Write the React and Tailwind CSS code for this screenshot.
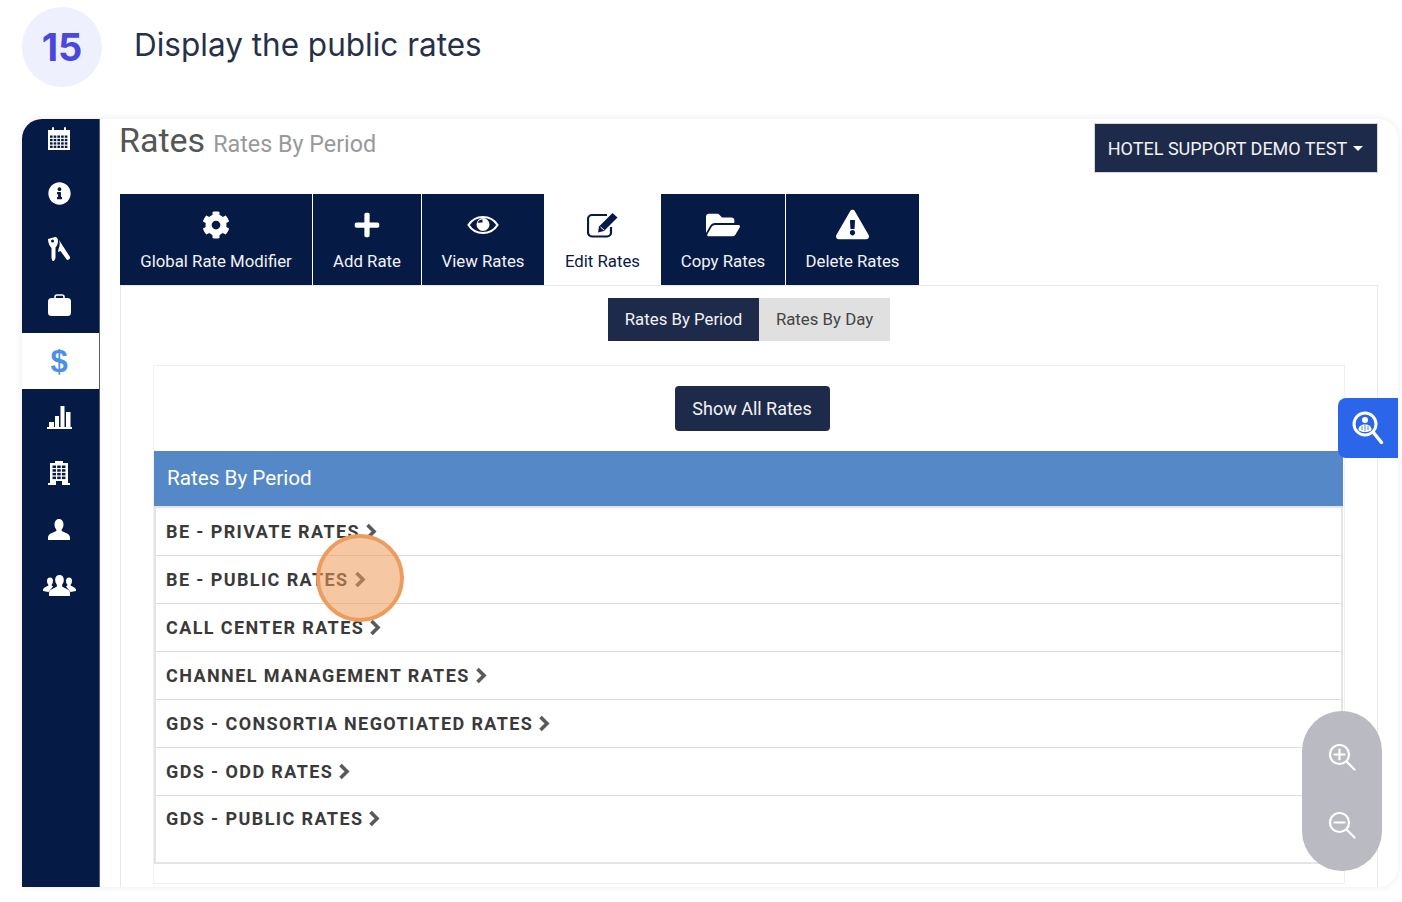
import React from 'react';
import { FaCog, FaPlus, FaFolderOpen, FaExclamationTriangle, FaInfoCircle } from 'react-icons/fa';

const CalendarIcon = () => (
  <svg width="22" height="23" viewBox="0 0 22 23" fill="white">
    <rect x="4" y="0" width="2" height="4" rx="1" />
    <rect x="16" y="0" width="2" height="4" rx="1" />
    <path d="M0 3h22v20H0z" />
    <g fill="#061a46">
      {[0, 1, 2, 3].map((r) =>
        [0, 1, 2, 3, 4].map((c) => <rect key={`${r}-${c}`} x={2 + c * 3.7} y={8.5 + r * 3.4} width="2.6" height="2.3" />)
      )}
    </g>
  </svg>
);

const KeysIcon = () => (
  <svg width="23" height="24" viewBox="0 0 23 24" fill="white">
    <path d="M0 2 7 0c2 0 3 2 3 4 0 3-1 5-2.500 6.500V21L6 24H4.500l-1-3V11C1.500 9 0 6 0 2Z" />
    <circle cx="4.500" cy="4" r="1.500" fill="#061a46" />
    <path d="M11 3c1 3 1 6-.5 9l-.5 3 2.500-1 6.500 9c2 0 3.500-1.500 3-3L11 3Z" />
  </svg>
);

const BriefcaseIcon = () => (
  <svg width="23" height="22" viewBox="0 0 23 22" fill="white">
    <rect x="0" y="4" width="23" height="18" rx="3.500" />
    <path d="M7 4.500V3a2 2 0 0 1 2-2h5a2 2 0 0 1 2 2v1.500" fill="none" stroke="white" strokeWidth="1.600" />
  </svg>
);

const BarsIcon = () => (
  <svg width="25" height="23" viewBox="0 0 25 23" fill="white">
    <rect x="2" y="16" width="5" height="6" />
    <rect x="8" y="10" width="4" height="12" />
    <rect x="13.500" y="0" width="4" height="22" />
    <rect x="19" y="6" width="4.500" height="16" />
    <rect x="0" y="21" width="25" height="2" />
  </svg>
);

const BuildingIcon = () => (
  <svg width="22" height="24" viewBox="0 0 22 24" fill="white">
    <path d="M2 2h5V0h8v2h5v20h2v2h-8v-4H8v4H0v-2h2Z" />
    <g fill="#061a46">
      {[0, 1, 2, 3].map((r) =>
        [0, 1, 2].map((c) => <rect key={`${r}-${c}`} x={4.500 + c * 4.700} y={4.500 + r * 3.700} width="3.500" height="2.500" />)
      )}
    </g>
  </svg>
);

const UserIcon = () => (
  <svg width="22" height="21" viewBox="0 0 22 21" fill="white">
    <path d="M11 0c3 0 4.500 2.500 4.500 5.500 0 2-.8 4-1.800 5v1.500C16 13.500 22 14.500 22 18.500V21H0v-2.500C0 14.500 6 13.500 8.300 12v-1.500c-1-1-1.800-3-1.800-5C6.500 2.500 8 0 11 0Z" />
  </svg>
);

const UsersIcon = () => (
  <svg width="33" height="21" viewBox="0 0 33 21" fill="white">
    <path d="M7 2.500c2 0 3 1.500 3 3.500 0 1.500-.6 3-1.300 3.600v1L10 11.500 5.500 17 0 16v-1.500c0-1.500 4-3 5.300-4v-1C4.600 9 4 7.500 4 6c0-2 1-3.500 3-3.500Z" />
    <path d="M26 2.500c-2 0-3 1.500-3 3.500 0 1.500.6 3 1.300 3.600v1L23 11.500 27.500 17l5.500-1v-1.500c0-1.500-4-3-5.300-4v-1c.7-.6 1.300-2.100 1.300-3.600 0-2-1-3.500-3-3.500Z" />
    <path d="M16.500 0c3 0 4.300 2.300 4.300 5 0 2-.8 3.800-1.700 4.700v1.800c2 1.500 7.900 3 7.900 6V21H6v-3.500c0-3 5.900-4.500 7.900-6V9.700C13 8.800 12.200 7 12.200 5c0-2.700 1.300-5 4.300-5Z" />
  </svg>
);

const EyeIcon = () => (
  <svg width="32" height="22" viewBox="0 0 32 22" fill="none">
    <path d="M1.500 11C5 5.500 10 3 16 3s11 2.500 14.500 8C27 16.500 22 19 16 19S5 16.500 1.500 11Z" stroke="white" strokeWidth="2.200" />
    <circle cx="16" cy="10.500" r="6.500" fill="white" />
    <path d="M10.500 8.500c1-2 3-3 5-3v3c-1.500 0-3 .5-5 0Z" fill="#061a46" />
  </svg>
);

const EditIcon = () => (
  <svg width="32" height="26" viewBox="0 0 32 26" fill="none">
    <path d="M24 15v5.500a4 4 0 0 1-4 4H5a4 4 0 0 1-4-4V7a4 4 0 0 1 4-4h15" stroke="#061a46" strokeWidth="2.200" />
    <path d="M25.500 1l5 4.500L17 19l-6 1.500L12 14.500Z" fill="#061a46" />
    <path d="M13.500 15l3.500 3" stroke="white" strokeWidth="1" />
  </svg>
);

const SearchPersonIcon = () => (
  <svg width="32" height="34" viewBox="0 0 32 34" fill="none">
    <circle cx="13" cy="13" r="11" stroke="white" strokeWidth="3" />
    <path d="M21 21l8.500 10.500" stroke="white" strokeWidth="3.500" strokeLinecap="round" />
    <circle cx="13" cy="9" r="3" fill="white" />
    <path d="M6.500 19c0-4 3-5.500 6.500-5.500s6.500 1.500 6.500 5.500c-2 1.500-4 2-6.500 2s-4.500-.5-6.500-2Z" fill="white" />
    <path d="M13 14v6M10 15v4M16 15v4" stroke="#2b66ea" strokeWidth="0.800" />
  </svg>
);

const ZoomGlass = ({ plus }) => (
  <svg width="28" height="28" viewBox="0 0 28 28" fill="none" stroke="white" strokeWidth="2.200" strokeLinecap="round">
    <circle cx="11.500" cy="11.500" r="9.500" />
    <path d="M18.500 18.500l8 8" />
    <path d="M6.500 11.500h10" />
    {plus && <path d="M11.500 6.500v10" />}
  </svg>
);

const Chevron = () => (
  <svg width="12" height="17" viewBox="0 0 12 17" fill="none" className="ml-[5px]">
    <path d="M2.500 2l6.500 6.500-6.500 6.500" stroke="#5a5a5a" strokeWidth="3.600" />
  </svg>
);

const DollarGlyph = () => (
  <span className="font-['Liberation_Sans',sans-serif] font-bold text-[31px] leading-none text-[#4a90e8]">$</span>
);

const sideItems = [
  { icon: <CalendarIcon />, h: 'h-[46px]', align: 'items-start pt-[8px]' },
  { icon: <FaInfoCircle size={23} color="white" />, h: 'h-[56px]' },
  { icon: <KeysIcon />, h: 'h-[56px]' },
  { icon: <BriefcaseIcon />, h: 'h-[56px]' },
  { icon: <DollarGlyph />, h: 'h-[56px]', active: true },
  { icon: <BarsIcon />, h: 'h-[56px]' },
  { icon: <BuildingIcon />, h: 'h-[56px]' },
  { icon: <UserIcon />, h: 'h-[56px]' },
  { icon: <UsersIcon />, h: 'h-[56px]' },
];

const tabs = [
  { label: 'Global Rate Modifier', w: 'w-[192px]', icon: <FaCog size={28} color="white" /> },
  { label: 'Add Rate', w: 'w-[108px]', icon: <FaPlus size={28} color="white" /> },
  { label: 'View Rates', w: 'w-[122px]', icon: <EyeIcon /> },
  { label: 'Edit Rates', w: 'w-[115px]', icon: <EditIcon />, active: true },
  { label: 'Copy Rates', w: 'w-[124px]', icon: <FaFolderOpen size={34} color="white" /> },
  { label: 'Delete Rates', w: 'w-[133px]', icon: <FaExclamationTriangle size={33} color="white" /> },
];

const rates = [
  'BE - PRIVATE RATES',
  'BE - PUBLIC RATES',
  'CALL CENTER RATES',
  'CHANNEL MANAGEMENT RATES',
  'GDS - CONSORTIA NEGOTIATED RATES',
  'GDS - ODD RATES',
  'GDS - PUBLIC RATES',
];

export default function App() {
  return (
    <div className="relative w-[1402px] h-[902px] overflow-hidden bg-white font-['Roboto',sans-serif]">
      <div className="flex items-start h-[119px] pl-[22px] pt-[7px]">
        <div className="w-[80px] h-[80px] rounded-full bg-[#eef0fe] flex items-center justify-center text-[38px] font-bold text-[#4a47dc] font-['Inter',sans-serif]">
          15
        </div>
        <div className="ml-[32px] mt-[17px] text-[31.500px] leading-[42px] text-[#27304a] font-['Inter',sans-serif]">
          Display the public rates
        </div>
      </div>

      <div className="ml-[22px] w-[1376px] h-[768px] flex rounded-tl-[20px] rounded-tr-[20px] rounded-br-[20px] shadow-[0_0_8px_rgba(0,0,0,0.08)] overflow-hidden">
        <div className="w-[78px] shrink-0 bg-[#061a46] flex flex-col border-r border-[#555e70]">
          {sideItems.map((item, i) => (
            <div
              key={i}
              className={`${item.h} flex justify-center pr-[3px] ${item.align || 'items-center'} ${item.active ? 'bg-white' : ''}`}
            >
              {item.icon}
            </div>
          ))}
        </div>

        <div className="flex-1 pl-[20px] pr-[20px]">
          <div className="flex justify-between h-[75px] pt-[3px]">
            <div className="flex items-baseline h-[36px] -ml-px">
              <span className="text-[34px] leading-[36px] text-[#555555]">Rates</span>
              <span className="ml-[8px] text-[23.300px] text-[#999999]">Rates By Period</span>
            </div>
            <div className="mt-px w-[284px] h-[50px] pr-[1px] bg-[#1e2a4a] border border-[#d5d8de] text-[#f2f3f5] text-[18px] flex items-center justify-center">
              HOTEL SUPPORT DEMO TEST
              <span className="ml-[6px] w-0 h-0 border-x-[5px] border-x-transparent border-t-[5px] border-t-white" />
            </div>
          </div>

          <div className="flex gap-px h-[91px]">
            {tabs.map((tab) => (
              <div
                key={tab.label}
                className={`${tab.w} flex flex-col items-center ${tab.active ? 'bg-white text-[#061a46]' : 'bg-[#061a46] text-[#f2f3f5]'}`}
              >
                <div className="h-[57px] flex items-center justify-center pt-[4px]">{tab.icon}</div>
                <div className="text-[16.800px] leading-[20px]">{tab.label}</div>
              </div>
            ))}
          </div>

          <div className="h-[602px] border border-[#e8e8e8] px-[32px] border-b-0">
            <div className="flex justify-center h-[79px] pt-[12px] text-[16.800px]">
              <div className="w-[151px] h-[43px] bg-[#1e2a4a] text-[#f2f3f5] flex items-center justify-center">Rates By Period</div>
              <div className="w-[131px] h-[43px] bg-[#e0e0e0] text-[#444444] flex items-center justify-center">Rates By Day</div>
            </div>

            <div className="h-[519px] border border-[#f0f0f0] pt-[20px]">
              <div className="flex justify-center pl-[6px]">
                <div className="w-[155px] h-[45px] rounded-[4px] bg-[#1e2a4a] text-[#f2f3f5] text-[18px] flex items-center justify-center">
                  Show All Rates
                </div>
              </div>
              <div className="mt-[20px] mr-px h-[55px] bg-[#5488c7] text-white text-[20.700px] flex items-center pl-[13px]">
                Rates By Period
              </div>
              <div className="mr-px h-[358px] border-2 border-[#e4e4e4]">
                {rates.map((rate, i) => (
                  <div
                    key={rate}
                    className={`flex items-center pl-[10px] text-[18px] font-bold tracking-[1.400px] text-[#3a3a3a] ${i === 6 ? 'h-[47px] pb-[3px]' : 'h-[48px] border-b border-[#dcdcdc]'}`}
                  >
                    {rate}
                    <Chevron />
                  </div>
                ))}
              </div>
            </div>
          </div>
        </div>
      </div>

      <div className="absolute left-[316px] top-[534px] w-[88px] h-[88px] rounded-full bg-[#ed9a57]/55 border-[4px] border-[#ec9c5c]" />
      <div className="absolute left-[1338px] top-[398px] w-[60px] h-[60px] rounded-l-[8px] bg-[#2b66ea] flex items-center justify-center">
        <SearchPersonIcon />
      </div>
      <div className="absolute left-[1302px] top-[711px] w-[80px] h-[160px] rounded-full bg-[#babbc2] flex flex-col items-center pt-[32px] gap-[40px]">
        <ZoomGlass plus />
        <ZoomGlass />
      </div>
    </div>
  );
}
